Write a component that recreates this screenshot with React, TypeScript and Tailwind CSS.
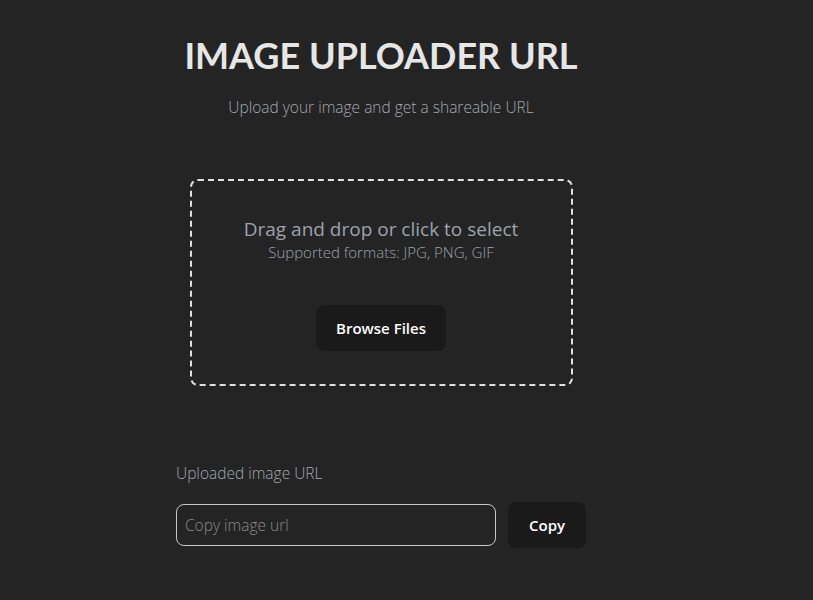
import React from "react"

export default function App() {
  return (
    <div className="min-h-[600px] w-full bg-[#242424] font-['Open_Sans',sans-serif]">
      <div className="ml-[176px] flex w-[410px] flex-col pt-[34px]">
        <h1 className="-mx-10 whitespace-nowrap text-center font-['Lato',sans-serif] text-[36px] font-bold leading-[42px] text-[#e6e6e6]">
          IMAGE UPLOADER URL
        </h1>
        <p className="mt-[20px] text-center text-[15.5px] font-light leading-[22px] text-[#a3a7b2]">
          Upload your image and get a shareable URL
        </p>

        <div className="mx-auto mt-[61px] flex h-[207px] w-[383px] flex-col items-center rounded-lg border-2 border-dashed border-[#e0e0e0] pt-[35px]">
          <p className="text-[19px] leading-[26px] text-[#9da2ae]">Drag and drop or click to select</p>
          <p className="text-[15px] font-light leading-[20px] text-[#9da2ae]">
            Supported formats: JPG, PNG, GIF
          </p>
          <button className="mt-[43px] h-[46px] w-[130px] rounded-lg bg-[#1a1a1a] text-[15px] font-semibold text-white">
            Browse Files
          </button>
        </div>

        <label className="mt-[76px] text-[15.5px] font-light text-[#a3a7b2]">Uploaded image URL</label>
        <div className="mt-[17px] flex items-center gap-3">
          <input
            placeholder="Copy image url"
            className="h-[42px] w-[320px] rounded-lg border border-[#c8c8c8] bg-transparent px-2 text-[15.5px] font-light text-white outline-none placeholder:text-[#8a8a8a]"
          />
          <button className="h-[46px] w-[78px] rounded-lg bg-[#1a1a1a] text-[15px] font-semibold text-white">
            Copy
          </button>
        </div>
      </div>
    </div>
  )
}
